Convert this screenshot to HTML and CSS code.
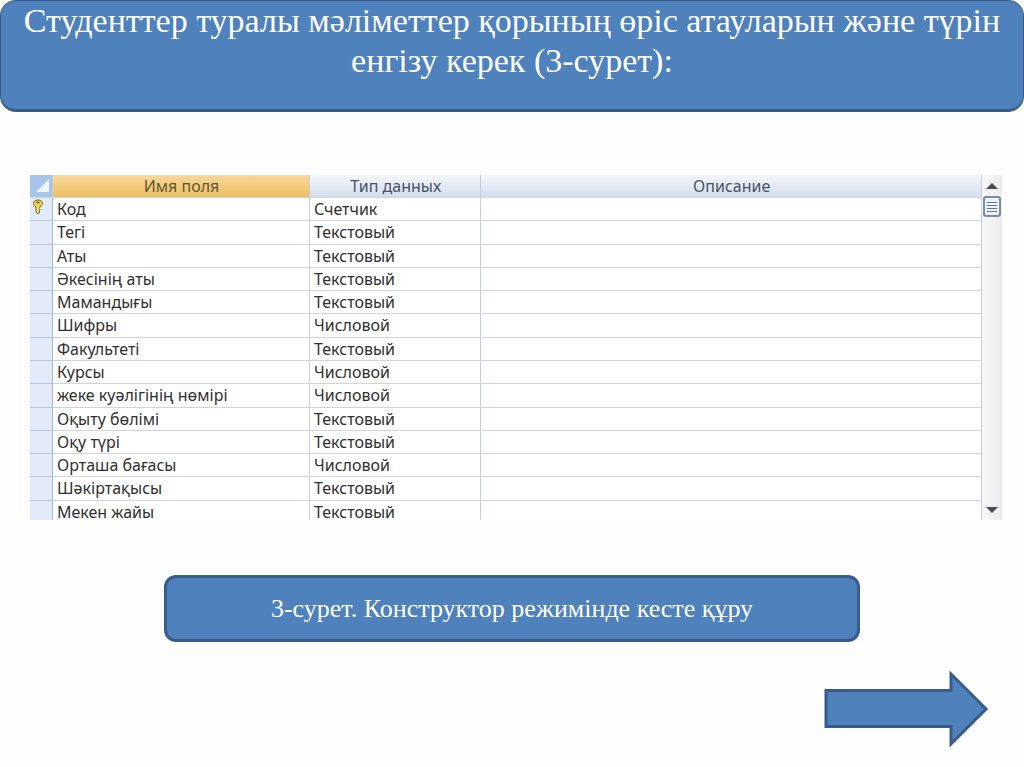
FILE: index.html
```html
<!DOCTYPE html>
<html lang="kk">
<head>
<meta charset="utf-8">
<meta name="viewport" content="width=device-width, initial-scale=1">
<title>Конструктор режимінде кесте құру</title>
<link rel="stylesheet" href="styles.css">
</head>
<body>
<main class="slide">
  <h1 class="title">Студенттер туралы мәліметтер қорының өріс атауларын және түрін енгізу керек (3-сурет):</h1>

  <section class="designer">
    <table class="fields">
      <colgroup><col class="col-mark"><col class="col-name"><col class="col-type"><col></colgroup>
      <thead>
        <tr>
          <th class="corner"><svg width="22" height="22" viewBox="0 0 22 22" aria-hidden="true"><path d="M19 4v13H6z" fill="#eef4fd"/></svg></th>
          <th class="active">Имя поля</th><th>Тип данных</th><th>Описание</th>
        </tr>
      </thead>
      <tbody>
        <tr><td class="mark"><svg width="12" height="16" viewBox="0 0 12 16" aria-hidden="true"><path d="M6 1C3 1 1.500 2.500 1.500 4.500C1.500 6 2.500 7.300 4 8v5l2 2 2-2-1-1 1-1.500-1-1L8 8c1.500-.7 2.500-2 2.500-3.500C10.500 2.500 9 1 6 1z" fill="#efd44b" stroke="#75682e"/><path d="M4.500 3.500h3" stroke="#675c32" stroke-width="1.500"/><path d="M5.500 8v5" stroke="#fff4a0"/></svg></td><td>Код</td><td>Счетчик</td><td></td></tr>
        <tr><td class="mark"></td><td>Тегі</td><td>Текстовый</td><td></td></tr>
        <tr><td class="mark"></td><td>Аты</td><td>Текстовый</td><td></td></tr>
        <tr><td class="mark"></td><td>Әкесінің аты</td><td>Текстовый</td><td></td></tr>
        <tr><td class="mark"></td><td>Мамандығы</td><td>Текстовый</td><td></td></tr>
        <tr><td class="mark"></td><td>Шифры</td><td>Числовой</td><td></td></tr>
        <tr><td class="mark"></td><td>Факультеті</td><td>Текстовый</td><td></td></tr>
        <tr><td class="mark"></td><td>Курсы</td><td>Числовой</td><td></td></tr>
        <tr><td class="mark"></td><td>жеке куәлігінің нөмірі</td><td>Числовой</td><td></td></tr>
        <tr><td class="mark"></td><td>Оқыту бөлімі</td><td>Текстовый</td><td></td></tr>
        <tr><td class="mark"></td><td>Оқу түрі</td><td>Текстовый</td><td></td></tr>
        <tr><td class="mark"></td><td>Орташа бағасы</td><td>Числовой</td><td></td></tr>
        <tr><td class="mark"></td><td>Шәкіртақысы</td><td>Текстовый</td><td></td></tr>
        <tr><td class="mark"></td><td>Мекен жайы</td><td>Текстовый</td><td></td></tr>
      </tbody>
    </table>
    <div class="scrollbar">
      <button class="step" type="button" aria-label="Жоғары"><svg width="12" height="6" viewBox="0 0 12 6"><path d="M0 6L6 0l6 6z" fill="#4a4a55"/></svg></button>
      <button class="thumb" type="button" aria-label="Айналдыру"><svg width="10" height="12" viewBox="0 0 10 12"><path d="M0 1.500h10M0 4.500h10M0 7.500h10M0 10.500h10" stroke="#68758f"/></svg></button>
      <button class="step last" type="button" aria-label="Төмен"><svg width="12" height="6" viewBox="0 0 12 6"><path d="M0 0h12L6 6z" fill="#4a4a55"/></svg></button>
    </div>
  </section>

  <p class="caption">3-сурет. Конструктор режимінде кесте құру</p>

  <a class="next" href="#next" aria-label="Келесі"><svg width="166" height="78" viewBox="0 0 166 78" aria-hidden="true"><path d="M3 20.500h125V4l35 35-35 35V56.500H3z" fill="#4f81bd" stroke="#385d8a" stroke-width="3"/></svg></a>
</main>
</body>
</html>
```
FILE: styles.css
```css
* {
  box-sizing: border-box;
}

body {
  margin: 0;
  background: #fefefe;
  font-family: "Liberation Serif", serif;
}

.slide {
  display: flex;
  flex-direction: column;
}

.title {
  margin: 0;
  padding: 0 8px 28px;
  border: 1px solid #385d8a;
  border-bottom-width: 3px;
  border-radius: 16px;
  background: #4f81bd;
  color: #fff;
  font-size: 34px;
  font-weight: 400;
  line-height: 40px;
  text-align: center;
}

.designer {
  display: flex;
  max-height: 345px;
  margin: 63px 22px 0 30px;
  overflow: hidden;
}

.fields {
  flex: 1;
  height: 349px;
  border-collapse: separate;
  border-spacing: 0;
  table-layout: fixed;
  background: #fff;
  color: #303030;
  font-family: "Noto Sans", sans-serif;
  font-size: 16px;
  line-height: 18px;
}

.col-mark {
  width: 23px;
}

.col-name {
  width: 27%;
}

.col-type {
  width: 18%;
}

.fields th,
.fields td {
  padding: 2px 3px 0 4px;
  border-right: 1px solid #c3ced8;
  border-bottom: 1px solid #d2d5d7;
  text-align: left;
  vertical-align: top;
  white-space: nowrap;
}

.fields th {
  background: linear-gradient(#f3f6fb, #d3deed);
  color: #485263;
  font-weight: 400;
  text-align: center;
}

.fields th.active {
  background: linear-gradient(#f7d79c, #edc060);
  color: #655632;
}

.fields th.corner {
  padding: 0;
  background: #a9c4e9;
}

.fields td.mark {
  padding: 1px 0 0 2px;
  border-right-color: #9fb9cf;
  border-bottom-color: #b4c6da;
  background: #e3ebf9;
}

.fields svg {
  display: block;
}

.scrollbar {
  display: flex;
  flex-direction: column;
  width: 20px;
  height: 345px;
  padding: 0 1px;
  background: linear-gradient(90deg, #f7f7f7, #ececee);
}

.step,
.thumb {
  display: grid;
  place-items: center;
  height: 21px;
  padding: 0;
  border: 0;
  background: none;
}

.thumb {
  border: 2px solid #7c8ba8;
  border-radius: 3px;
  background: #eef3fb;
}

.last {
  margin-top: auto;
}

.caption {
  width: 68%;
  margin: 55px auto 0;
  padding: 16px 16px 15px;
  border: 3px solid #385d8a;
  border-radius: 12px;
  background: #4f81bd;
  color: #fff;
  font-size: 26px;
  line-height: 30px;
  text-align: center;
}

.next {
  align-self: flex-end;
  margin: 28px 35px 0 0;
}

.next svg {
  display: block;
}
```
